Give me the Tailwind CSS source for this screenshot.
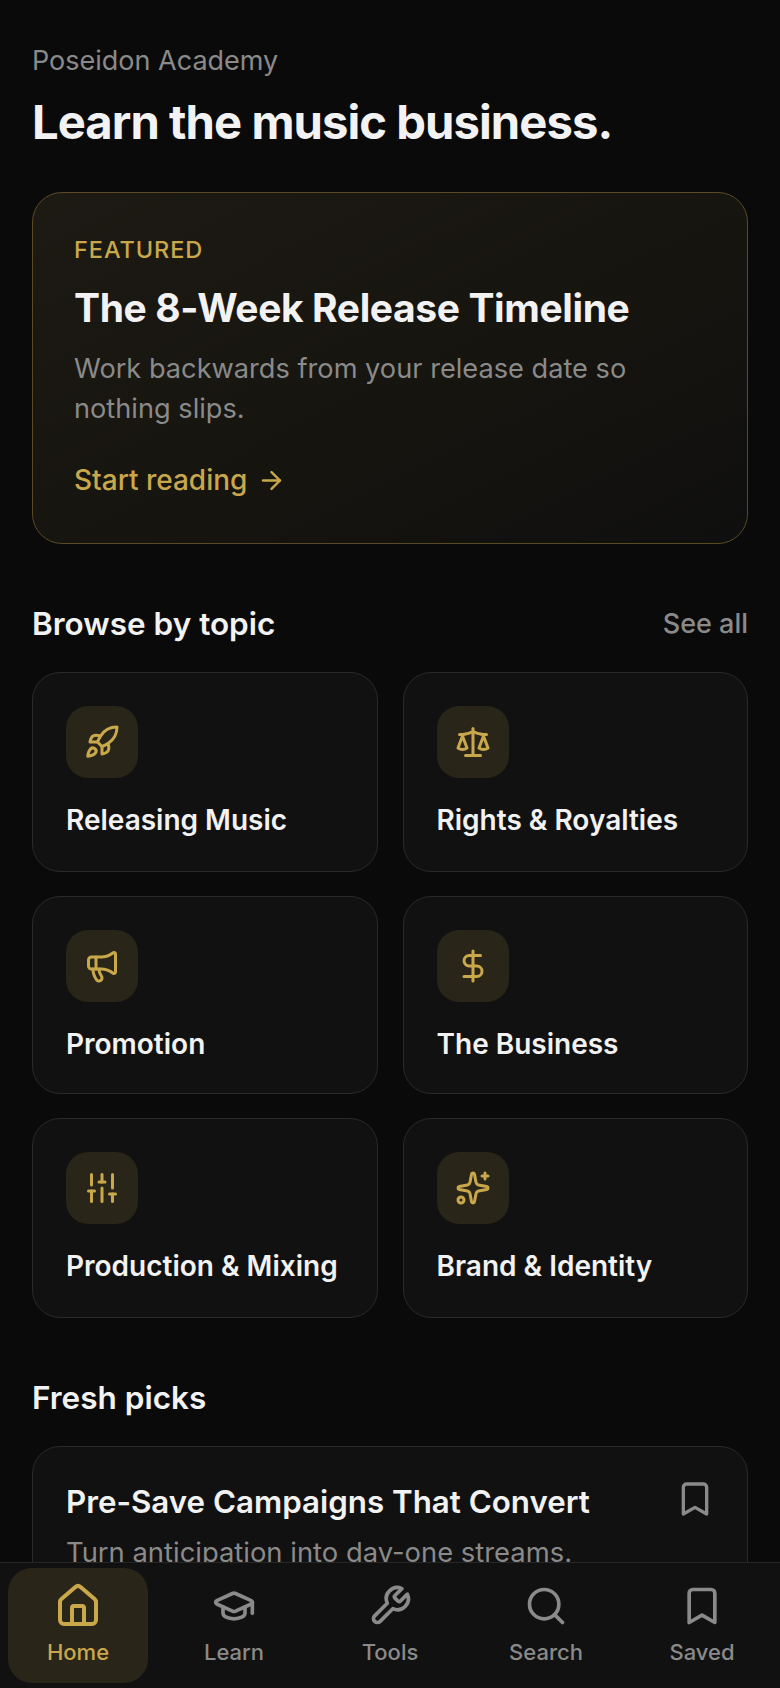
<!DOCTYPE html>
<html lang="en">
<head>
  <meta charset="UTF-8">
  <meta name="viewport" content="width=device-width, initial-scale=1">
  <title>Poseidon Academy</title>
  <script src="https://cdn.jsdelivr.net/npm/@tailwindcss/browser@4"></script>
</head>
<body class="bg-[#0a0a0a] font-['Inter',sans-serif]">
<div class="relative h-[1688px] w-[780px] overflow-hidden">

  <!-- HEADER -->
  <header class="px-8 pt-[45px]">
    <p class="text-[27px] leading-[32px] text-[#8a8a8a]">Poseidon Academy</p>
    <h1 class="mt-[17px] text-[47.2px] leading-[56px] font-bold tracking-[-0.02em] text-[#f2f2f2]">Learn the music business.</h1>
  </header>

  <!-- FEATURED -->
  <section class="mx-8 mt-[42px] h-[352px] rounded-[30px] border border-[#5a4b25] bg-gradient-to-br from-[#1c1a13] via-[#17150f] to-[#0f0f0f] px-[41px] pt-[43px]">
    <p class="text-[23.5px] leading-[28px] font-medium tracking-[0.04em] text-[#c9a84c]">FEATURED</p>
    <h2 class="mt-[21px] text-[39px] leading-[46px] font-bold tracking-[-0.01em] text-[#f2f2f2]">The 8-Week Release Timeline</h2>
    <p class="mt-[18px] text-[27.2px] leading-[40px] text-[#8a8a8a]">Work backwards from your release date so nothing slips.</p>
    <a class="mt-[34px] flex items-center gap-[10px] text-[28px] leading-[34px] font-medium text-[#c9a84c]">Start reading
      <svg class="size-[29px]" viewBox="0 0 24 24" fill="none" stroke="currentColor" stroke-width="2" stroke-linecap="round" stroke-linejoin="round"><path d="M5 12h14"/><path d="m12 5 7 7-7 7"/></svg>
    </a>
  </section>

  <!-- TOPICS -->
  <section class="mt-[61px] px-8">
    <div class="flex items-center justify-between">
      <h2 class="text-[31.5px] leading-[38px] font-semibold text-[#f2f2f2]">Browse by topic</h2>
      <a class="text-[27px] leading-[38px] font-medium text-[#8a8a8a]">See all</a>
    </div>
    <div class="mt-[29px] grid grid-cols-2 gap-x-[25px] gap-y-[24.5px]">

      <div class="h-[199.5px] rounded-[28px] border border-[#2a2a2a] bg-[#111111] px-[33px] pt-[33px]">
        <div class="flex size-[72px] items-center justify-center rounded-[22px] bg-[#2a2519] text-[#c9a84c]">
          <svg class="size-[36px]" viewBox="0 0 24 24" fill="none" stroke="currentColor" stroke-width="2" stroke-linecap="round" stroke-linejoin="round"><path d="M4.5 16.5c-1.5 1.26-2 5-2 5s3.74-.5 5-2c.71-.84.7-2.13-.09-2.91a2.18 2.18 0 0 0-2.91-.09z"/><path d="m12 15-3-3a22 22 0 0 1 2-3.95A12.88 12.88 0 0 1 22 2c0 2.72-.78 7.5-6 11a22.35 22.35 0 0 1-4 2z"/><path d="M9 12H4s.55-3.03 2-4c1.62-1.08 5 0 5 0"/><path d="M12 15v5s3.03-.55 4-2c1.08-1.62 0-5 0-5"/></svg>
        </div>
        <p class="mt-[24px] text-[28px] leading-[36px] font-semibold text-[#f2f2f2]">Releasing Music</p>
      </div>

      <div class="h-[199.5px] rounded-[28px] border border-[#2a2a2a] bg-[#111111] px-[33px] pt-[33px]">
        <div class="flex size-[72px] items-center justify-center rounded-[22px] bg-[#2a2519] text-[#c9a84c]">
          <svg class="size-[36px]" viewBox="0 0 24 24" fill="none" stroke="currentColor" stroke-width="2" stroke-linecap="round" stroke-linejoin="round"><path d="m16 16 3-8 3 8c-.87.65-1.92 1-3 1s-2.13-.35-3-1Z"/><path d="m2 16 3-8 3 8c-.87.65-1.92 1-3 1s-2.13-.35-3-1Z"/><path d="M7 21h10"/><path d="M12 3v18"/><path d="M3 7h2c2 0 5-1 7-2 2 1 5 2 7 2h2"/></svg>
        </div>
        <p class="mt-[24px] text-[28px] leading-[36px] font-semibold text-[#f2f2f2]">Rights &amp; Royalties</p>
      </div>

      <div class="h-[197.5px] rounded-[28px] border border-[#2a2a2a] bg-[#111111] px-[33px] pt-[33px]">
        <div class="flex size-[72px] items-center justify-center rounded-[22px] bg-[#2a2519] text-[#c9a84c]">
          <svg class="size-[36px]" viewBox="0 0 24 24" fill="none" stroke="currentColor" stroke-width="2" stroke-linecap="round" stroke-linejoin="round"><path d="M11 6a13 13 0 0 0 8.4-2.8A1 1 0 0 1 21 4v12a1 1 0 0 1-1.6.8A13 13 0 0 0 11 14H5a2 2 0 0 1-2-2V8a2 2 0 0 1 2-2z"/><path d="M6 14a12 12 0 0 0 2.4 7.2 2 2 0 0 0 3.2-2.4A8 8 0 0 1 10 14"/><path d="M8 6v8"/></svg>
        </div>
        <p class="mt-[24px] text-[28px] leading-[36px] font-semibold text-[#f2f2f2]">Promotion</p>
      </div>

      <div class="h-[197.5px] rounded-[28px] border border-[#2a2a2a] bg-[#111111] px-[33px] pt-[33px]">
        <div class="flex size-[72px] items-center justify-center rounded-[22px] bg-[#2a2519] text-[#c9a84c]">
          <svg class="size-[36px]" viewBox="0 0 24 24" fill="none" stroke="currentColor" stroke-width="2" stroke-linecap="round" stroke-linejoin="round"><path d="M12 2v20"/><path d="M17 5H9.5a3.5 3.5 0 0 0 0 7h5a3.5 3.5 0 0 1 0 7H6"/></svg>
        </div>
        <p class="mt-[24px] text-[28px] leading-[36px] font-semibold text-[#f2f2f2]">The Business</p>
      </div>

      <div class="h-[199.5px] rounded-[28px] border border-[#2a2a2a] bg-[#111111] px-[33px] pt-[33px]">
        <div class="flex size-[72px] items-center justify-center rounded-[22px] bg-[#2a2519] text-[#c9a84c]">
          <svg class="size-[36px]" viewBox="0 0 24 24" fill="none" stroke="currentColor" stroke-width="2" stroke-linecap="round" stroke-linejoin="round"><path d="M10 8h4"/><path d="M12 21v-9"/><path d="M12 8V3"/><path d="M17 16h4"/><path d="M19 12V3"/><path d="M19 21v-5"/><path d="M3 14h4"/><path d="M5 10V3"/><path d="M5 21v-7"/></svg>
        </div>
        <p class="mt-[24px] text-[28px] leading-[36px] font-semibold text-[#f2f2f2]">Production &amp; Mixing</p>
      </div>

      <div class="h-[199.5px] rounded-[28px] border border-[#2a2a2a] bg-[#111111] px-[33px] pt-[33px]">
        <div class="flex size-[72px] items-center justify-center rounded-[22px] bg-[#2a2519] text-[#c9a84c]">
          <svg class="size-[36px]" viewBox="0 0 24 24" fill="none" stroke="currentColor" stroke-width="2" stroke-linecap="round" stroke-linejoin="round"><path d="M11.017 2.814a1 1 0 0 1 1.966 0l1.051 5.558a2 2 0 0 0 1.594 1.594l5.558 1.051a1 1 0 0 1 0 1.966l-5.558 1.051a2 2 0 0 0-1.594 1.594l-1.051 5.558a1 1 0 0 1-1.966 0l-1.051-5.558a2 2 0 0 0-1.594-1.594l-5.558-1.051a1 1 0 0 1 0-1.966l5.558-1.051a2 2 0 0 0 1.594-1.594z"/><path d="M20 2v4"/><path d="M22 4h-4"/><circle cx="4" cy="20" r="2"/></svg>
        </div>
        <p class="mt-[24px] text-[28px] leading-[36px] font-semibold text-[#f2f2f2]">Brand &amp; Identity</p>
      </div>
    </div>
  </section>

  <!-- FRESH PICKS -->
  <section class="mt-[61px] px-8">
    <h2 class="text-[31.5px] leading-[38px] font-semibold text-[#f2f2f2]">Fresh picks</h2>
    <div class="mt-[29px] flex h-[300px] justify-between rounded-[28px] border border-[#2a2a2a] bg-[#111111] pt-[35px] pr-[32px] pl-[33px]">
      <div>
        <h3 class="text-[31.3px] leading-[40px] font-semibold text-[#f2f2f2]">Pre-Save Campaigns That Convert</h3>
        <p class="mt-[12px] text-[27.4px] leading-[36px] text-[#8a8a8a]">Turn anticipation into day-one streams.</p>
      </div>
      <svg class="-mt-[3px] size-[40px] shrink-0 text-[#8a8a8a]" viewBox="0 0 24 24" fill="none" stroke="currentColor" stroke-width="2" stroke-linecap="round" stroke-linejoin="round"><path d="m19 21-7-4-7 4V5a2 2 0 0 1 2-2h10a2 2 0 0 1 2 2v16z"/></svg>
    </div>
  </section>

  <!-- BOTTOM NAV -->
  <nav class="absolute inset-x-0 bottom-0 grid h-[126px] grid-cols-5 gap-4 border-t border-[#262626] bg-[#111111] px-2 pt-[5px] pb-[5px]">
    <a class="flex flex-col items-center justify-center gap-[8px] rounded-[24px] bg-[#2a2519] pb-[3px] text-[#c9a84c]">
      <svg class="size-[48px]" viewBox="0 0 24 24" fill="none" stroke="currentColor" stroke-width="2" stroke-linecap="round" stroke-linejoin="round"><path d="M15 21v-8a1 1 0 0 0-1-1h-4a1 1 0 0 0-1 1v8"/><path d="M3 10a2 2 0 0 1 .709-1.528l7-5.999a2 2 0 0 1 2.582 0l7 5.999A2 2 0 0 1 21 10v9a2 2 0 0 1-2 2H5a2 2 0 0 1-2-2z"/></svg>
      <span class="text-[22px] leading-[28px] font-medium">Home</span>
    </a>
    <a class="flex flex-col items-center justify-center gap-[8px] pb-[3px] text-[#8a8a8a]">
      <svg class="my-[2px] size-[44px]" viewBox="0 0 24 24" fill="none" stroke="currentColor" stroke-width="2" stroke-linecap="round" stroke-linejoin="round"><path d="M21.42 10.922a1 1 0 0 0-.019-1.838L12.83 5.18a2 2 0 0 0-1.66 0L2.6 9.08a1 1 0 0 0 0 1.832l8.57 3.908a2 2 0 0 0 1.66 0z"/><path d="M22 10v6"/><path d="M6 12.5V16a6 3 0 0 0 12 0v-3.5"/></svg>
      <span class="text-[22px] leading-[28px] font-medium">Learn</span>
    </a>
    <a class="flex flex-col items-center justify-center gap-[8px] pb-[3px] text-[#8a8a8a]">
      <svg class="my-[2px] size-[44px]" viewBox="0 0 24 24" fill="none" stroke="currentColor" stroke-width="2" stroke-linecap="round" stroke-linejoin="round"><path d="M14.7 6.3a1 1 0 0 0 0 1.4l1.6 1.6a1 1 0 0 0 1.4 0l3.77-3.77a6 6 0 0 1-7.94 7.94l-6.91 6.91a2.12 2.12 0 0 1-3-3l6.91-6.91a6 6 0 0 1 7.94-7.94l-3.76 3.76z"/></svg>
      <span class="text-[22px] leading-[28px] font-medium">Tools</span>
    </a>
    <a class="flex flex-col items-center justify-center gap-[8px] pb-[3px] text-[#8a8a8a]">
      <svg class="my-[2px] size-[44px]" viewBox="0 0 24 24" fill="none" stroke="currentColor" stroke-width="2" stroke-linecap="round" stroke-linejoin="round"><path d="m21 21-4.3-4.3"/><circle cx="11" cy="11" r="8"/></svg>
      <span class="text-[22px] leading-[28px] font-medium">Search</span>
    </a>
    <a class="flex flex-col items-center justify-center gap-[8px] pb-[3px] text-[#8a8a8a]">
      <svg class="my-[2px] size-[44px]" viewBox="0 0 24 24" fill="none" stroke="currentColor" stroke-width="2" stroke-linecap="round" stroke-linejoin="round"><path d="m19 21-7-4-7 4V5a2 2 0 0 1 2-2h10a2 2 0 0 1 2 2v16z"/></svg>
      <span class="text-[22px] leading-[28px] font-medium">Saved</span>
    </a>
  </nav>
</div>
</body>
</html>
